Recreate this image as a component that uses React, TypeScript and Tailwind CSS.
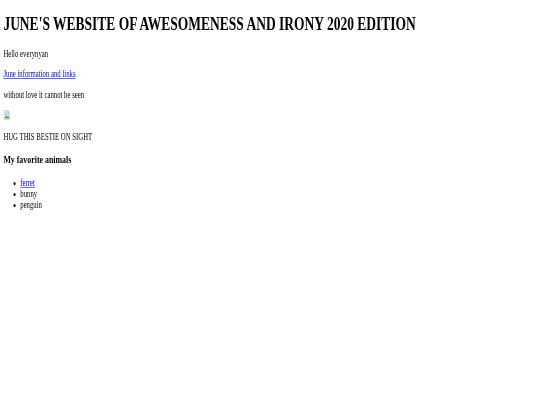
const BrokenImage = () => (
  <svg width="16" height="16" viewBox="0 0 16 16" className="block">
    <path d="M0.5 0.5H10.5L15.5 5.5V15.5H0.5Z" fill="#fff" stroke="#b0b0b0" />
    <path d="M10.5 0.5V5.5H15.5Z" fill="#e8e8e8" stroke="#b0b0b0" />
    <path d="M2 2H9V6H14V9H2Z" fill="#c3d4f3" />
    <path d="M2 14L6 8L9 11L11 9.5L14 12V14Z" fill="#58a24a" />
  </svg>
);

export default function App() {
  return (
    <div className="w-[540px] h-[405px] overflow-hidden bg-white">
      {/* the shot is a 1280 wide page squeezed into 540x405 */}
      <div className="w-[1280px] h-[670px] origin-top-left scale-x-[0.421875] scale-y-[0.605] blur-[0.4px] px-[8px] text-black font-['Liberation_Serif',serif] text-[16px] leading-[normal]">
        <h1 className="pt-[21.44px] text-[32px] font-bold leading-[normal]">
          JUNE'S WEBSITE OF AWESOMENESS AND IRONY 2020 EDITION
        </h1>
        <p className="mt-[21.44px]">Hello everynyan</p>
        <p className="mt-[16px]">
          <a href="#" className="text-[#0000ee] underline">
            June information and links
          </a>
        </p>
        <p className="mt-[16px]">without love it cannot be seen</p>
        <div className="mt-[16px] h-[19px]">
          <BrokenImage />
        </div>
        <p className="mt-[16px]">HUG THIS BESTIE ON SIGHT</p>
        <h3 className="mt-[18px] text-[18.72px] font-bold leading-[normal]">My favorite animals</h3>
        <ul className="mt-[19px] pl-[40px] list-disc">
          <li>
            <a href="#" className="text-[#0000ee] underline">
              ferret
            </a>
          </li>
          <li>bunny</li>
          <li>penguin</li>
        </ul>
      </div>
    </div>
  );
}
